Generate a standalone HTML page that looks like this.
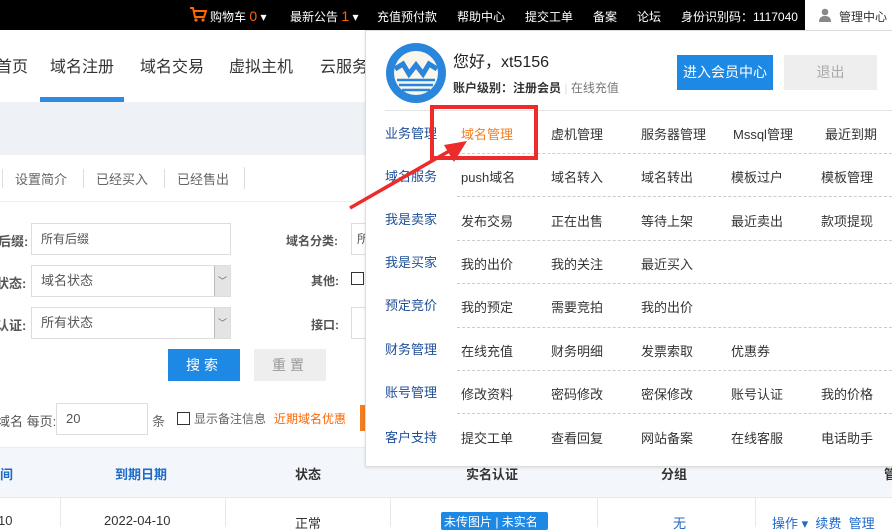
<!DOCTYPE html><html><head><meta charset="utf-8"><style>
*{margin:0;padding:0;box-sizing:border-box}
body{width:892px;height:526px;overflow:hidden;position:relative;background:#fff;font-family:"Liberation Sans","Noto Sans CJK SC",sans-serif;font-size:13px;color:#333}
.a{position:absolute;white-space:nowrap}
.top{left:0;top:0;width:892px;height:30px;background:#000;color:#fff;font-size:12px}
.top span{position:absolute;top:8px}
.inp{position:absolute;border:1px solid #ddd;background:#fff;font-size:12px;color:#555;padding-left:9px}
.dd{position:absolute;width:16px;right:0;top:0;bottom:0;background:#e4e4e4;border-left:1px solid #bbb;color:#666;font-size:9px;text-align:center;line-height:30px}
.lbl{color:#1d4e96;font-size:13px}
.it{font-size:13px;color:#333}
.dash{position:absolute;left:457px;width:435px;border-top:1px dashed #ccc;height:0}
</style></head><body>
<div class="a top">
<svg class="a" style="left:189px;top:6px" width="18" height="17" viewBox="0 0 18 17"><path d="M1 2h3l2 9h9l2-6H5" fill="none" stroke="#f60" stroke-width="2"/><circle cx="7" cy="14" r="1.6" fill="#f60"/><circle cx="14" cy="14" r="1.6" fill="#f60"/></svg>
<span style="left:210px">购物车 <b style="color:#f60;font-weight:normal;font-size:14px">0</b> ▾</span>
<span style="left:290px">最新公告 <b style="color:#f60;font-weight:normal;font-size:14px">1</b> ▾</span>
<span style="left:377px">充值预付款</span>
<span style="left:457px">帮助中心</span>
<span style="left:525px">提交工单</span>
<span style="left:593px">备案</span>
<span style="left:637px">论坛</span>
<span style="left:681px">身份识别码：1117040</span>
</div>
<div class="a" style="left:805px;top:0;width:87px;height:30px;background:#fff;font-size:12px">
<svg class="a" style="left:14px;top:8px" width="12" height="14" viewBox="0 0 12 14"><circle cx="6" cy="4" r="3.3" fill="#888"/><path d="M0 14c0-5 3-6 6-6s6 1 6 6z" fill="#888"/></svg>
<span class="a" style="left:34px;top:8px">管理中心</span></div>
<div class="a" style="left:0;top:30px;width:892px;height:72px;background:#fff;font-size:16px">
<span class="a" style="left:-4px;top:23px">首页</span>
<span class="a" style="left:50px;top:23px">域名注册</span>
<span class="a" style="left:140px;top:23px">域名交易</span>
<span class="a" style="left:229px;top:23px">虚拟主机</span>
<span class="a" style="left:320px;top:23px">云服务</span>
<div class="a" style="left:40px;top:67px;width:84px;height:5px;background:#2b8be6"></div>
</div>
<div class="a" style="left:0;top:102px;width:892px;height:53px;background:#eef1f6"></div>
<div class="a" style="left:0;top:155px;width:892px;height:47px;background:#fff;border-bottom:1px solid #eee;color:#666">
<span class="a" style="left:2px;top:14px;border-left:1px solid #ddd;padding-left:12px">设置简介</span>
<span class="a" style="left:83px;top:14px;border-left:1px solid #ddd;padding-left:12px">已经买入</span>
<span class="a" style="left:164px;top:14px;border-left:1px solid #ddd;padding-left:12px">已经售出</span>
<div class="a" style="left:244px;top:12px;height:22px;border-left:1px solid #ddd"></div>
</div>
<span class="a" style="left:-2px;top:231px;font-weight:bold;color:#555">后缀:</span>
<div class="inp" style="left:31px;top:223px;width:200px;height:32px;line-height:30px">所有后缀</div>
<span class="a" style="left:-4px;top:273px;font-weight:bold;color:#555">状态:</span>
<div class="inp" style="left:31px;top:265px;width:200px;height:32px;line-height:30px;font-size:13px">域名状态<div class="dd">﹀</div></div>
<span class="a" style="left:-4px;top:315px;font-weight:bold;color:#555">认证:</span>
<div class="inp" style="left:31px;top:307px;width:200px;height:32px;line-height:30px;font-size:13px">所有状态<div class="dd">﹀</div></div>
<span class="a" style="left:286px;top:232px;font-weight:bold;color:#555;font-size:12px">域名分类:</span>
<div class="inp" style="left:351px;top:223px;width:20px;height:32px;line-height:30px;padding-left:5px">所</div>
<span class="a" style="left:311px;top:272px;font-weight:bold;color:#555;font-size:12px">其他:</span>
<div class="a" style="left:351px;top:272px;width:13px;height:13px;border:1px solid #333"></div>
<span class="a" style="left:311px;top:316px;font-weight:bold;color:#555;font-size:12px">接口:</span>
<div class="inp" style="left:351px;top:307px;width:20px;height:32px"></div>
<div class="a" style="left:168px;top:349px;width:72px;height:32px;background:#1e88e5;color:#fff;font-size:14px;text-align:center;line-height:32px;letter-spacing:4px">搜索</div>
<div class="a" style="left:254px;top:349px;width:72px;height:32px;background:#eee;color:#999;font-size:14px;text-align:center;line-height:32px;letter-spacing:4px">重置</div>
<span class="a" style="left:-3px;top:411px;color:#555">域名 每页:</span>
<div class="inp" style="left:56px;top:403px;width:92px;height:32px;line-height:30px;font-size:13px">20</div>
<span class="a" style="left:152px;top:411px;color:#666">条</span>
<div class="a" style="left:177px;top:412px;width:13px;height:13px;border:1px solid #333"></div>
<span class="a" style="left:194px;top:410px;color:#666;font-size:12px">显示备注信息</span>
<span class="a" style="left:274px;top:410px;color:#f60;font-size:12px">近期域名优惠</span>
<div class="a" style="left:360px;top:405px;width:6px;height:26px;background:#f47d20"></div>
<div class="a" style="left:0;top:447px;width:892px;height:50px;background:#f3f7fb;border-top:1px solid #e8ecf0;font-weight:bold;font-size:13px">
<span class="a" style="left:0;top:16px;color:#1d6ac8">间</span>
<span class="a" style="left:115px;top:16px;color:#1d6ac8">到期日期</span>
<span class="a" style="left:295px;top:16px">状态</span>
<span class="a" style="left:466px;top:16px">实名认证</span>
<span class="a" style="left:661px;top:16px">分组</span>
<span class="a" style="left:884px;top:16px">管</span>
</div>
<div class="a" style="left:0;top:497px;width:892px;height:29px;border-top:1px solid #e8e8e8;font-size:13px">
<span class="a" style="left:-2px;top:15px">10</span>
<div class="a" style="left:60px;top:0;height:29px;border-left:1px solid #e8e8e8"></div>
<span class="a" style="left:104px;top:15px">2022-04-10</span>
<div class="a" style="left:225px;top:0;height:29px;border-left:1px solid #e8e8e8"></div>
<span class="a" style="left:295px;top:15px">正常</span>
<div class="a" style="left:390px;top:0;height:29px;border-left:1px solid #e8e8e8"></div>
<div class="a" style="left:441px;top:14px;width:107px;height:18px;background:#1e88e5;border-radius:2px;color:#fff;font-size:12px;padding:1px 3px">未传图片 | 未实名</div>
<div class="a" style="left:597px;top:0;height:29px;border-left:1px solid #e8e8e8"></div>
<span class="a" style="left:673px;top:15px;color:#1d6ac8">无</span>
<div class="a" style="left:755px;top:0;height:29px;border-left:1px solid #e8e8e8"></div>
<span class="a" style="left:772px;top:15px;color:#1d6ac8">操作 ▾ &nbsp;续费 &nbsp;管理</span>
</div>
<div class="a" style="left:365px;top:30px;width:530px;height:437px;background:#fff;border:1px solid #ddd;box-shadow:0 1px 3px rgba(0,0,0,.1)">
<svg class="a" style="left:19px;top:11px" width="62" height="62" viewBox="0 0 62 62"><circle cx="31" cy="31" r="30" fill="#2a86dc"/><circle cx="31" cy="31" r="22" fill="#fbf6ec"/><path d="M10 27l8-5 6 10 7-9 7 9 6-10 8 5" fill="none" stroke="#2a86dc" stroke-width="5"/><path d="M12 38h38M14 43h34M17 48h28" stroke="#2a86dc" stroke-width="2.5"/></svg>
<span class="a" style="left:87px;top:17px;font-size:16px;color:#222">您好，xt5156</span>
<span class="a" style="left:87px;top:48px;font-size:12px;color:#333"><b>账户级别：注册会员</b> <span style="color:#ddd">|</span> <span style="color:#777">在线充值</span></span>
<div class="a" style="left:311px;top:24px;width:96px;height:35px;background:#1e88e5;color:#fff;font-size:14px;text-align:center;line-height:35px">进入会员中心</div>
<div class="a" style="left:418px;top:24px;width:93px;height:35px;background:#eee;color:#aaa;font-size:14px;text-align:center;line-height:35px">退出</div>
<div class="a" style="left:19px;top:79px;width:511px;border-top:1px solid #e4e4e4"></div>
</div>
<div class="dash" style="top:153px"></div><div class="dash" style="top:196px"></div><div class="dash" style="top:240px"></div><div class="dash" style="top:283px"></div><div class="dash" style="top:327px"></div><div class="dash" style="top:370px"></div><div class="dash" style="top:413px"></div>
<div class="a lbl" style="left:385px;top:123px">业务管理</div><div class="a lbl" style="left:385px;top:166px">域名服务</div><div class="a lbl" style="left:385px;top:209px">我是卖家</div><div class="a lbl" style="left:385px;top:252px">我是买家</div><div class="a lbl" style="left:385px;top:295px">预定竞价</div><div class="a lbl" style="left:385px;top:339px">财务管理</div><div class="a lbl" style="left:385px;top:382px">账号管理</div><div class="a lbl" style="left:385px;top:427px">客户支持</div>
<div class="a it" style="left:461px;top:124px;color:#f47d20">域名管理</div><div class="a it" style="left:551px;top:124px">虚机管理</div><div class="a it" style="left:641px;top:124px">服务器管理</div><div class="a it" style="left:733px;top:124px">Mssql管理</div><div class="a it" style="left:825px;top:124px">最近到期</div>
<div class="a it" style="left:461px;top:167px">push域名</div><div class="a it" style="left:551px;top:167px">域名转入</div><div class="a it" style="left:641px;top:167px">域名转出</div><div class="a it" style="left:731px;top:167px">模板过户</div><div class="a it" style="left:821px;top:167px">模板管理</div>
<div class="a it" style="left:461px;top:211px">发布交易</div><div class="a it" style="left:551px;top:211px">正在出售</div><div class="a it" style="left:641px;top:211px">等待上架</div><div class="a it" style="left:731px;top:211px">最近卖出</div><div class="a it" style="left:821px;top:211px">款项提现</div>
<div class="a it" style="left:461px;top:254px">我的出价</div><div class="a it" style="left:551px;top:254px">我的关注</div><div class="a it" style="left:641px;top:254px">最近买入</div>
<div class="a it" style="left:461px;top:297px">我的预定</div><div class="a it" style="left:551px;top:297px">需要竞拍</div><div class="a it" style="left:641px;top:297px">我的出价</div>
<div class="a it" style="left:461px;top:341px">在线充值</div><div class="a it" style="left:551px;top:341px">财务明细</div><div class="a it" style="left:641px;top:341px">发票索取</div><div class="a it" style="left:731px;top:341px">优惠券</div>
<div class="a it" style="left:461px;top:384px">修改资料</div><div class="a it" style="left:551px;top:384px">密码修改</div><div class="a it" style="left:641px;top:384px">密保修改</div><div class="a it" style="left:731px;top:384px">账号认证</div><div class="a it" style="left:821px;top:384px">我的价格</div>
<div class="a it" style="left:461px;top:428px">提交工单</div><div class="a it" style="left:551px;top:428px">查看回复</div><div class="a it" style="left:641px;top:428px">网站备案</div><div class="a it" style="left:731px;top:428px">在线客服</div><div class="a it" style="left:821px;top:428px">电话助手</div>
<div class="a" style="left:430px;top:105px;width:108px;height:55px;border:4px solid #ee2b2b"></div>
<svg class="a" style="left:340px;top:130px" width="140" height="90" viewBox="0 0 140 90"><path d="M10 78L118 16" stroke="#ee2b2b" stroke-width="3.5"/><path d="M127 11L104 15L114 32Z" fill="#ee2b2b"/></svg>
</body></html>
